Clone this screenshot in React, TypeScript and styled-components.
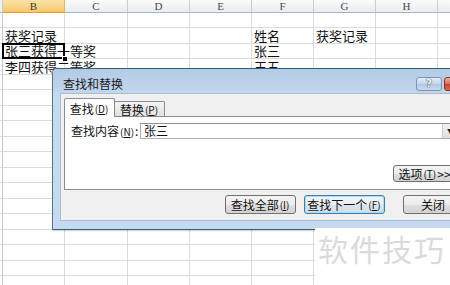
import React from "react";
import styled, { createGlobalStyle, css } from "styled-components";

const GlobalStyle = createGlobalStyle`
  *, *::before, *::after { box-sizing: border-box; }
  html, body { margin: 0; padding: 0; background: #fff; }
  body {
    width: 450px; height: 285px; overflow: hidden;
    font-family: "Noto Sans CJK SC", "Noto Sans", sans-serif;
  }
`;

const Screen = styled.div`
  position: relative;
  width: 450px;
  height: 285px;
  overflow: hidden;
  background: #fff;
`;

/* ---------- spreadsheet ---------- */
const Sheet = styled.div`
  display: grid;
  grid-template-columns: 3px 62px 63px 62px 62px 62px 62px 62px 40px;
  grid-template-rows: 13px repeat(9, 15px 16px);
`;

const Corner = styled.div`
  border-right: 1px solid #c5cbd3;
  border-bottom: 1px solid #9eb6ce;
  background: #eef1f5;
`;

const ColHeader = styled.div<{ $active?: boolean }>`
  display: flex;
  align-items: center;
  justify-content: center;
  font-family: "Liberation Serif", "DejaVu Serif", serif;
  font-size: 11px;
  color: #4a4a4a;
  border-right: 1px solid #c5cbd3;
  border-bottom: 1px solid #9eb6ce;
  background: linear-gradient(#fafbfc, #e9edf1);
  ${(p) =>
    p.$active &&
    css`
      background: linear-gradient(#fbe3a6, #f5c86a);
      border-bottom-color: #f29536;
      border-right-color: #e3b25a;
      color: #3a3a3a;
    `}
`;

const RowStub = styled.div`
  border-right: 1px solid #c5cbd3;
  border-bottom: 1px solid #dadcdd;
  background: #fff;
`;

const Cell = styled.div<{ $selected?: boolean }>`
  position: relative;
  display: flex;
  align-items: flex-end;
  padding: 0 0 0 2px;
  border-right: 1px solid #dadcdd;
  border-bottom: 1px solid #dadcdd;
  font-family: "Noto Sans CJK SC", sans-serif;
  font-size: 13px;
  line-height: 14px;
  color: #111;
  white-space: nowrap;
  overflow: visible;
  ${(p) =>
    p.$selected &&
    css`
      z-index: 2;
      &::after {
        content: "";
        position: absolute;
        top: -1px;
        left: -1px;
        right: -1px;
        bottom: -1px;
        border: 2px solid #000;
        pointer-events: none;
      }
    `}
`;

const FillHandle = styled.span`
  position: absolute;
  right: -4px;
  bottom: -4px;
  width: 6px;
  height: 6px;
  background: #000;
  border: 1px solid #fff;
  z-index: 3;
`;

/* ---------- dialog ---------- */
const Dialog = styled.div`
  position: absolute;
  left: 52px;
  top: 68px;
  width: 442px;
  height: 162px;
  display: flex;
  flex-direction: column;
  background: #c6daef;
  border: 1px solid #32607c;
  border-left-color: #59728a;
  border-radius: 5px 5px 0 0;
  box-shadow: 1px 1px 2px rgba(0, 0, 0, 0.2);
  z-index: 5;
`;

const TitleBar = styled.div`
  height: 24px;
  flex: none;
  display: flex;
  justify-content: space-between;
  align-items: flex-start;
  padding: 0 6px 0 10px;
  border-radius: 4px 4px 0 0;
  background: linear-gradient(#b3cbe6, #c2d6ed);
`;

const Title = styled.span`
  margin-top: 8px;
  font-size: 12px;
  line-height: 14px;
  color: #1a1a1a;
`;

const CaptionButtons = styled.div`
  display: flex;
  gap: 2px;
  margin-top: 8px;
`;

const HelpButton = styled.div`
  width: 26px;
  height: 14px;
  display: flex;
  align-items: center;
  justify-content: center;
  border: 1px solid #7a94b3;
  border-radius: 3px;
  background: linear-gradient(#e4edf7, #c2d4ea 50%, #b1c7e2 51%, #c9daee);
  font-family: "DejaVu Sans", sans-serif;
  font-size: 11px;
  font-weight: bold;
  color: #f4f7fb;
  text-shadow: 0 0 1px #2b3a4e, 0 0 1px #2b3a4e;
  line-height: 12px;
`;

const CloseButton = styled.div`
  width: 43px;
  height: 14px;
  border: 1px solid #8a3324;
  border-radius: 3px;
  background: linear-gradient(#eab1a2, #d66f58 50%, #c8442c 51%, #d86a4f);
`;

const Client = styled.div`
  flex: 1;
  margin: 0 7px 8px 7px;
  display: flex;
  flex-direction: column;
  padding: 4px 6px 0 3px;
  background: #f0f0f0;
  border: 1px solid #a8bcd3;
`;

const TabRow = styled.div`
  display: flex;
  align-items: flex-end;
  height: 18px;
  position: relative;
  z-index: 1;
`;

const Tab = styled.div<{ $active?: boolean }>`
  display: flex;
  align-items: center;
  justify-content: center;
  font-size: 12px;
  color: #111;
  border: 1px solid #898c95;
  border-bottom: none;
  ${(p) =>
    p.$active
      ? css`
          width: 51px;
          height: 19px;
          margin-bottom: -1px;
          background: #fff;
          border-radius: 2px 2px 0 0;
        `
      : css`
          width: 50px;
          height: 15px;
          background: linear-gradient(#f4f4f4, #e1e1e1);
          border-left: none;
          border-radius: 0 2px 0 0;
        `}
`;

const Panel = styled.div`
  height: 74px;
  flex: none;
  display: flex;
  flex-direction: column;
  padding: 6px 0 0 6px;
  background: #fff;
  border: 1px solid #898c95;
`;

const FieldRow = styled.div`
  display: flex;
  align-items: center;
  height: 16px;
`;

const Label = styled.span`
  width: 69px;
  flex: none;
  font-size: 12px;
  line-height: 14px;
  color: #111;
  white-space: nowrap;
`;

const Combo = styled.div`
  flex: 1;
  height: 16px;
  display: flex;
  margin-right: 18px;
  background: #fff;
  border: 1px solid #abadb3;
  border-top-color: #8e8f8f;
`;

const ComboText = styled.span`
  flex: 1;
  padding-left: 3px;
  font-size: 12px;
  line-height: 14px;
  color: #111;
`;

const ComboArrow = styled.div`
  width: 17px;
  display: flex;
  align-items: center;
  justify-content: center;
  border-left: 1px solid #c9c9c9;
  background: linear-gradient(#f3f3f3, #dedede);
  font-size: 8px;
  color: #222;
`;

const OptionsRow = styled.div`
  display: flex;
  justify-content: flex-end;
  margin-top: 26px;
  padding-right: 22px;
`;

const ButtonRow = styled.div`
  display: flex;
  justify-content: flex-end;
  margin-top: 5px;
  padding-right: 16px;
`;

const Button = styled.div<{ $w: number; $h?: number; $focused?: boolean; $gap?: number }>`
  width: ${(p) => p.$w}px;
  height: ${(p) => p.$h ?? 19}px;
  margin-right: ${(p) => p.$gap ?? 0}px;
  display: flex;
  align-items: center;
  justify-content: center;
  font-size: 12px;
  line-height: 14px;
  color: #111;
  white-space: nowrap;
  border: 1px solid #707070;
  border-radius: 3px;
  background: linear-gradient(#f4f4f4, #ececec 50%, #dfdfdf 51%, #d2d2d2);
  ${(p) =>
    p.$focused &&
    css`
      border-color: #3c7fb1;
      box-shadow: inset 0 0 0 1px #a8dcf8;
      background: linear-gradient(#f2f7fb, #e8eef4 50%, #dde6ee 51%, #d3dde6);
    `}
`;

const Key = styled.span`
  font-size: 10px;
  margin: 0 1px;
`;

/* ---------- watermark ---------- */
const Watermark = styled.div`
  position: absolute;
  left: 315px;
  top: 228px;
  right: 0;
  bottom: 0;
  z-index: 6;
  background: #fff;
  padding: 5px 0 0 3px;
  font-family: "Noto Sans CJK SC", sans-serif;
  font-size: 30px;
  line-height: 30px;
  letter-spacing: 2px;
  color: #dadada;
  white-space: nowrap;
`;

const cols = ["", "B", "C", "D", "E", "F", "G", "H", ""];

const data: Record<string, string> = {
  "2-1": "获奖记录",
  "2-5": "姓名",
  "2-6": "获奖记录",
  "3-1": "张三获得一等奖",
  "3-5": "张三",
  "4-1": "李四获得二等奖",
  "4-5": "王五",
};

export default function App() {
  const rows = Array.from({ length: 18 }, (_, i) => i + 1);
  return (
    <Screen>
      <GlobalStyle />
      <Sheet>
        <Corner />
        {cols.slice(1).map((c, i) => (
          <ColHeader key={"h" + i} $active={c === "B"}>
            {c}
          </ColHeader>
        ))}
        {rows.map((r) => (
          <React.Fragment key={r}>
            <RowStub />
            {cols.slice(1).map((_, ci) => {
              const c = ci + 1;
              const selected = r === 3 && c === 1;
              return (
                <Cell key={c} $selected={selected}>
                  {data[`${r}-${c}`] ?? ""}
                  {selected && <FillHandle />}
                </Cell>
              );
            })}
          </React.Fragment>
        ))}
      </Sheet>

      <Dialog>
        <TitleBar>
          <Title>查找和替换</Title>
          <CaptionButtons>
            <HelpButton>?</HelpButton>
            <CloseButton />
          </CaptionButtons>
        </TitleBar>
        <Client>
          <TabRow>
            <Tab $active>
              查找<Key>(<u>D</u>)</Key>
            </Tab>
            <Tab>
              替换<Key>(<u>P</u>)</Key>
            </Tab>
          </TabRow>
          <Panel>
            <FieldRow>
              <Label>
                查找内容<Key>(<u>N</u>)</Key>:
              </Label>
              <Combo>
                <ComboText>张三</ComboText>
                <ComboArrow>▼</ComboArrow>
              </Combo>
            </FieldRow>
            <OptionsRow>
              <Button $w={63} $h={17}>
                选项<Key>(<u>T</u>)</Key> &gt;&gt;
              </Button>
            </OptionsRow>
          </Panel>
          <ButtonRow>
            <Button $w={71} $gap={8}>
              查找全部<Key>(<u>I</u>)</Key>
            </Button>
            <Button $w={81} $gap={18} $focused>
              查找下一个<Key>(<u>F</u>)</Key>
            </Button>
            <Button $w={60}>关闭</Button>
          </ButtonRow>
        </Client>
      </Dialog>

      <Watermark>软件技巧</Watermark>
    </Screen>
  );
}
